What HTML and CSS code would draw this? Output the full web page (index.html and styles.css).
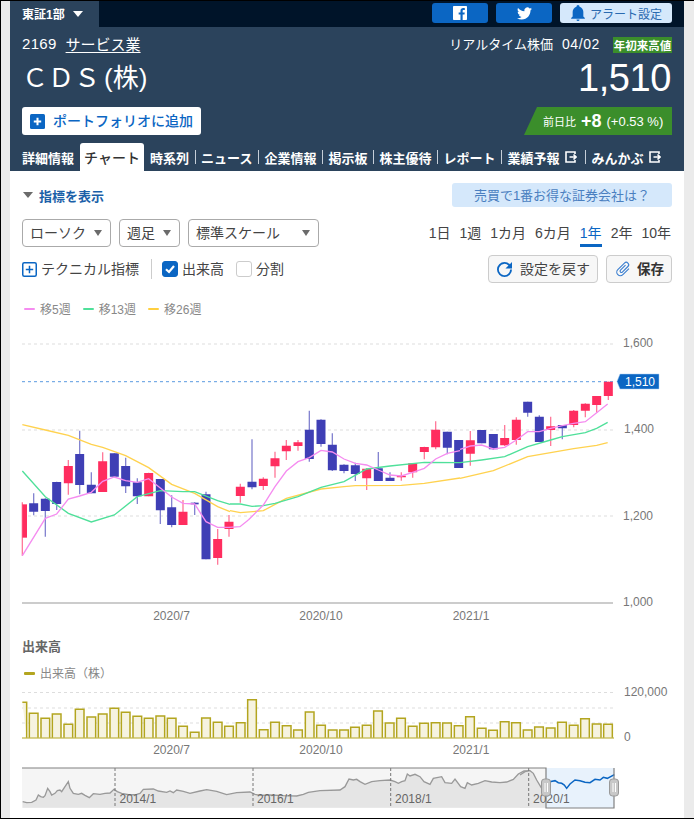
FILE: index.html
```html
<!DOCTYPE html>
<html lang="ja">
<head>
<meta charset="utf-8">
<title>CDS(株) チャート</title>
<link rel="stylesheet" href="styles.css">
</head>
<body>
<div class="frame">
  <div class="topbar">
    <div class="market">東証1部<span class="tri tri-white"></span></div>
    <div class="social">
      <a class="sbtn"><svg class="ico-fb" viewBox="0 0 24 24"><path d="M22.676 0H1.324C.593 0 0 .593 0 1.324v21.352C0 23.408.593 24 1.324 24h11.494v-9.294H9.689v-3.621h3.129V8.41c0-3.099 1.894-4.785 4.659-4.785 1.325 0 2.464.097 2.796.141v3.24h-1.921c-1.5 0-1.792.721-1.792 1.771v2.311h3.584l-.465 3.63H16.56V24h6.115c.733 0 1.325-.592 1.325-1.324V1.324C24 .593 23.408 0 22.676 0"/></svg></a>
      <a class="sbtn"><svg class="ico-tw" viewBox="0 0 24 24"><path d="M23.953 4.57a10 10 0 01-2.825.775 4.958 4.958 0 002.163-2.723c-.951.555-2.005.959-3.127 1.184a4.92 4.92 0 00-8.384 4.482C7.69 8.095 4.067 6.13 1.64 3.162a4.822 4.822 0 00-.666 2.475c0 1.71.87 3.213 2.188 4.096a4.904 4.904 0 01-2.228-.616v.06a4.923 4.923 0 003.946 4.827 4.996 4.996 0 01-2.212.085 4.936 4.936 0 004.604 3.417 9.867 9.867 0 01-6.102 2.105c-.39 0-.779-.023-1.17-.067a13.995 13.995 0 007.557 2.209c9.053 0 13.998-7.496 13.998-13.985 0-.21 0-.42-.015-.63A9.935 9.935 0 0024 4.59z"/></svg></a>
      <a class="alert"><svg class="ico-bell" viewBox="3 2 18 21"><path d="M21 19v1H3v-1l2-2v-6c0-3.1 2.03-5.83 5-6.71V4a2 2 0 114 0v.29c2.97.88 5 3.61 5 6.71v6zm-7 2a2 2 0 11-4 0"/></svg>アラート設定</a>
    </div>
  </div>
  <header class="head">
    <div class="row-meta">
      <div class="code"><span class="num">2169</span><a class="sector">サービス業</a></div>
      <div class="quote-meta"><span class="qt">リアルタイム株価</span><span class="qt date">04/02</span><span class="badge">年初来高値</span></div>
    </div>
    <div class="row-name">
      <h1 class="name">ＣＤＳ<span class="kabu">(株)</span></h1>
      <div class="price">1,510</div>
    </div>
    <div class="row-action">
      <a class="add"><svg class="ico-plus" viewBox="0 0 15 15"><rect width="15" height="15" rx="1.5"/><path class="plus-mark" d="M7.5 3.8v7.4M3.8 7.5h7.4"/></svg>ポートフォリオに追加</a>
      <div class="change"><span class="ch-label">前日比</span><b class="ch-val">+8</b><span class="ch-pct">(+0.53 %)</span></div>
    </div>
    <nav class="tabs">
      <a class="tab">詳細情報</a>
      <a class="tab tab-on">チャート</a>
      <a class="tab">時系列</a><i class="sep"></i>
      <a class="tab">ニュース</a><i class="sep"></i>
      <a class="tab">企業情報</a><i class="sep"></i>
      <a class="tab">掲示板</a><i class="sep"></i>
      <a class="tab">株主優待</a><i class="sep"></i>
      <a class="tab">レポート</a><i class="sep"></i>
      <a class="tab tab-ext">業績予報<svg class="ico-ext" viewBox="0 0 12 12"><path d="M10 3V1H1v10h9V9M4.5 6H11M8.5 3.5 11 6 8.5 8.5"/></svg></a><i class="sep sep-ext"></i>
      <a class="tab tab-ext">みんかぶ<svg class="ico-ext" viewBox="0 0 12 12"><path d="M10 3V1H1v10h9V9M4.5 6H11M8.5 3.5 11 6 8.5 8.5"/></svg></a>
    </nav>
  </header>
  <main class="content">
    <div class="bar bar-1">
      <a class="show"><span class="tri tri-gray"></span>指標を表示</a>
      <a class="promo">売買で1番お得な証券会社は？</a>
    </div>
    <div class="bar bar-2">
      <div class="selects">
        <div class="sel sel-a"><span class="lift">ローソク</span><span class="tri tri-gray"></span></div>
        <div class="sel sel-b"><span class="lift">週足</span><span class="tri tri-gray"></span></div>
        <div class="sel sel-c"><span class="lift">標準スケール</span><span class="tri tri-gray"></span></div>
      </div>
      <div class="ranges">
        <a>1日</a><a>1週</a><a>1カ月</a><a>6カ月</a><a class="on">1年</a><a>2年</a><a>10年</a>
      </div>
    </div>
    <div class="bar bar-3">
      <div class="opts">
        <a class="tech"><svg class="ico-tech" viewBox="0 0 15 15"><rect x=".75" y=".75" width="13.5" height="13.5" rx="1.5"/><path d="M7.5 3.8v7.4M3.8 7.5h7.4"/></svg><span class="lift">テクニカル指標</span></a>
        <i class="vdiv"></i>
        <label class="chk"><span class="box box-on"><svg viewBox="0 0 16 16"><path d="M4 8.3 7 11l5-6"/></svg></span><span class="lift">出来高</span></label>
        <label class="chk"><span class="box"></span><span class="lift">分割</span></label>
      </div>
      <div class="tools">
        <a class="tool tool-reset"><svg class="ico-tool" viewBox="4 4 16 16"><path d="M17.65 6.35A7.95 7.95 0 0012 4a8 8 0 108 8h-2a6 6 0 11-1.76-4.24L13 11h7V4z"/></svg><span class="lift">設定を戻す</span></a>
        <a class="tool tool-save"><svg class="ico-clip" viewBox="0 0 24 24"><path d="M16.5 6v11.5a4 4 0 01-8 0V5a2.5 2.5 0 015 0v10.5a1 1 0 01-2 0V6H10v9.5a2.5 2.5 0 005 0V5a4 4 0 00-8 0v12.5a5.5 5.5 0 0011 0V6h-1.5z"/></svg><span class="lift">保存</span></a>
      </div>
    </div>
    <div class="legend legend-ma">
      <span class="lg"><i class="dash c-pink"></i><span class="lift">移5週</span></span>
      <span class="lg"><i class="dash c-green"></i><span class="lift">移13週</span></span>
      <span class="lg"><i class="dash c-yellow"></i><span class="lift">移26週</span></span>
    </div>
    <svg class="chart" viewBox="10 330 674 300">
      <path class="grid" d="M22 344H613M22 430H613M22 516H613"/>
      <path class="last" d="M22 381.7H613"/>
      <path class="axis" d="M22 603H613"/>
      <g class="z" transform="translate(0 390) scale(.33333)">
        <path class="wick-r" d="M67 337V497M205 210V314M308 187V306M446 248V319M549 330V405M653 417V524M687 375V440"/>
        <path class="wick-b" d="M101 310V376M136 325V440M170 275V360M239 122V313M274 247V310M343 190V262M377 203V309M412 265V342M481 267V402M515 316V412M584 337V375M618 305V508"/>
        <path class="body-b" d="M101 340V365M136 326V363M170 276V342M239 192V285M274 284V310M343 190V260M377 228V289M412 277V319M481 267V361M515 352V405M618 313V508"/>
        <path class="body-b thin" d="M584 338V343"/>
        <path class="body-r" d="M205 228V280M308 214V306M446 249V319M549 365V405M653 447V504M687 395V417"/>
        <path class="body-r edge" d="M74 343V443"/>
      </g>
      <g class="z" transform="translate(230 390) scale(.33333)">
        <path class="wick-r" d="M31 281V338M100 262V300M135 185V263M169 150V210M204 150V182M410 235V300M514 247V272M548 220V263M583 170V208M617 94V178"/>
        <path class="wick-b" d="M66 148V298M238 62V215M273 88V170M307 130V243M342 223V250M376 218V273M445 186V273M480 247V273M652 125V193"/>
        <path class="body-r" d="M31 290V318M100 266V288M135 205V229M169 167V184M204 157V168M410 236V265M514 257V262M548 220V247M583 171V186M617 119V172"/>
        <path class="body-b" d="M66 275V292M238 119V207M273 89V162M307 164V241M342 224V243M376 226V252M445 235V273M480 263V273M652 125V173M686 150V234"/>
      </g>
      <g class="z" transform="translate(460 360) scale(.33333)">
        <path class="wick-r" d="M31 213V317M134 195V258M169 172V254M272 170V258M341 150V202M376 130V172M410 108V158M445 65V120"/>
        <path class="wick-b" d="M65 210V250M100 222V270M203 125V170M238 166V246M307 195V238"/>
        <path class="body-r" d="M31 241V281M134 234V256M169 179V240M272 199V210M341 152V195M376 131V152M410 108V135M445 65V108"/>
        <path class="body-b" d="M65 210V250M100 222V268M203 125V158M238 170V246M307 195V205"/>
      </g>
      <g class="z" transform="translate(0 390) scale(.33333)">
        <path class="ma-y" d="M67 104 136 120 205 136 274 163 308 172 377 197 446 233 515 283 584 310 653 350 690 365"/>
        <path class="ma-g" d="M67 243 136 320 205 370 274 396 343 375 412 320 481 302 549 305 584 305 653 332 690 343"/>
        <path class="ma-p" d="M67 497 136 385 170 372 205 327 239 318 274 307 308 274 343 261 377 272 412 277 446 266 481 294 515 321 549 340 584 342 618 395 653 412 687 412 720 410 745 390"/>
      </g>
      <g class="z" transform="translate(230 390) scale(.33333)">
        <path class="ma-y" d="M0 362 31 368 100 362 169 325 273 297 342 290 376 287 514 286 583 280 690 264"/>
        <path class="ma-g" d="M0 342 31 342 66 349 100 347 135 340 204 320 273 292 342 275 410 237 480 228 583 217 690 218"/>
        <path class="ma-p" d="M55 390 100 345 135 290 169 243 204 215 238 203 273 181 307 186 342 207 376 220 410 225 445 240 480 255 514 258 548 247 583 235 617 207 652 190 690 182"/>
      </g>
      <g class="z" transform="translate(460 360) scale(.33333)">
        <path class="ma-y" d="M0 355 100 332 203 290 341 266 410 256 443 248"/>
        <path class="ma-g" d="M0 308 65 300 134 290 203 260 272 240 307 230 376 218 410 205 443 187"/>
        <path class="ma-p" d="M0 268 31 258 65 255 100 267 134 262 169 240 203 215 238 215 272 205 307 197 341 190 376 185 410 158 443 132"/>
      </g>
      <path class="tag" d="M617 381.5 620 374H659V389H620Z"/>
      <text class="tag-t" x="625" y="386">1,510</text>
      <text class="lab" x="623" y="347">1,600</text>
      <text class="lab" x="624" y="433">1,400</text>
      <text class="lab" x="623" y="520">1,200</text>
      <text class="lab" x="623" y="606">1,000</text>
      <text class="lab mid" x="171.5" y="620">2020/7</text>
      <text class="lab mid" x="321" y="620">2020/10</text>
      <text class="lab mid" x="471" y="620">2021/1</text>
    </svg>
    <h2 class="vol-title">出来高</h2>
    <div class="legend legend-vol"><span class="lg"><i class="dash c-olive"></i><span class="lift">出来高（株）</span></span></div>
    <svg class="vol" viewBox="10 681 674 81">
      <path class="grid" d="M22 692.5H613M22 708H613M22 723H613"/>
      <g class="z" transform="translate(0 630) scale(.33333)">
        <path class="bar-v" d="M67 217H80V323M88 323V250H114V323M123 323V265H149V323M157 323V252H183V323M192 323V283H218V323M226 323V238H252V323M261 323V261H287V323M295 323V252H321V323M330 323V235H356V323M364 323V247H390V323M399 323V259H425V323M433 323V265H459V323M468 323V258H494V323M502 323V265H528V323M536 323V289H562V323M571 323V307H597V323M605 323V264H631V323M640 323V277H666V323M674 323V289H700V323M709 323V278H735V323M743 323V209H769V323M778 323V299H804V323M812 323V277H838V323M847 323V287H873V323M881 323V300H907V323M916 323V246H942V323M950 323V286H976V323M985 323V300H1011V323M1019 323V300H1045V323"/>
      </g>
      <g class="z" transform="translate(347 630) scale(.33333)">
        <path class="bar-v" d="M11 323V292H37V323M46 323V286H72V323M80 323V243H106V323M115 323V279H141V323M149 323V265H175V323M184 323V289H210V323M218 323V280H244V323M253 323V278H279V323M287 323V279H313V323M322 323V287H348V323M356 323V260H382V323M391 323V295H417V323M425 323V301H451V323M460 323V275H486V323M494 323V278H520V323M529 323V300H555V323M563 323V291H589V323M598 323V294H624V323M632 323V277H658V323M667 323V286H693V323M701 323V266H727V323M736 323V282H762V323M770 323V283H796V323"/>
      </g>
      <path class="base-v" d="M22 738H614"/>
      <text class="lab" x="624" y="696">120,000</text>
      <text class="lab" x="624" y="741">0</text>
      <text class="lab mid" x="171.5" y="754">2020/7</text>
      <text class="lab mid" x="321" y="754">2020/10</text>
      <text class="lab mid" x="471" y="754">2021/1</text>
    </svg>
    <svg class="nav" viewBox="10 762 674 55">
      <rect class="nav-bg" x="22" y="768" width="524" height="40"/>
      <rect class="nav-sel" x="546" y="768" width="68" height="40"/>
      <g class="z" transform="translate(10 760) scale(.33333)">
        <path class="nav-area" d="M38 125 50 128 65 127 78 120 85 105 92 110 100 112 105 107 113 85 120 95 125 105 135 100 142 92 150 90 155 95 165 80 175 65 180 85 190 100 205 103 215 100 225 106 238 113 250 101 270 103 285 100 300 99 312 88 322 95 335 100 360 105 380 103 390 100 400 88 430 87 445 93 470 97 480 93 490 98 500 90 520 94 540 100 570 93 590 89 620 94 650 104 680 98 720 96 735 103 750 106 780 105V143H38Z"/>
        <path class="nav-line" d="M38 125 50 128 65 127 78 120 85 105 92 110 100 112 105 107 113 85 120 95 125 105 135 100 142 92 150 90 155 95 165 80 175 65 180 85 190 100 205 103 215 100 225 106 238 113 250 101 270 103 285 100 300 99 312 88 322 95 335 100 360 105 380 103 390 100 400 88 430 87 445 93 470 97 480 93 490 98 500 90 520 94 540 100 570 93 590 89 620 94 650 104 680 98 720 96 735 103 750 106 780 105"/>
      </g>
      <g class="z" transform="translate(270 760) scale(.33333)">
        <path class="nav-area" d="M0 105 40 107 80 108 100 103 115 97 150 92 210 90 225 80 237 57 250 60 260 58 270 65 285 73 305 65 330 62 360 60 375 65 385 70 395 65 405 62 412 42 420 48 435 43 450 50 462 65 480 73 490 55 515 50 525 68 545 70 555 57 572 80 585 85 592 68 605 75 625 70 645 62 665 66 690 68 710 66 730 58 745 42 762 33 780 33V143H0Z"/>
        <path class="nav-line" d="M0 105 40 107 80 108 100 103 115 97 150 92 210 90 225 80 237 57 250 60 260 58 270 65 285 73 305 65 330 62 360 60 375 65 385 70 395 65 405 62 412 42 420 48 435 43 450 50 462 65 480 73 490 55 515 50 525 68 545 70 555 57 572 80 585 85 592 68 605 75 625 70 645 62 665 66 690 68 710 66 730 58 745 42 762 33 780 33"/>
      </g>
      <g class="z" transform="translate(520 760) scale(.33333)">
        <path class="nav-area" d="M0 45 15 35 30 32 40 40 50 60 65 85 78 100V143H0Z"/>
        <path class="nav-line" d="M0 45 15 35 30 32 40 40 50 60 65 85 78 100"/>
        <path class="nav-blue" d="M78 62 90 65 105 62 115 68 125 70 133 75 140 85 150 72 165 60 180 62 195 67 210 68 225 58 240 60 250 52 262 55 283 44"/>
      </g>
      <path class="nav-tick" d="M115 768V808M253 768V808M390.7 768V808M528.7 768V808"/>
      <path class="nav-edge" d="M22 768H546V808H614V768"/>
      <text class="lab nav-t" x="119.5" y="803">2014/1</text>
      <text class="lab nav-t" x="257" y="803">2016/1</text>
      <text class="lab nav-t" x="395" y="803">2018/1</text>
      <text class="lab nav-t" x="533" y="803">2020/1</text>
      <rect class="handle" x="541.5" y="779" width="9" height="17" rx="3"/>
      <path class="grip" d="M545 783V792M547.5 783V792"/>
      <rect class="handle" x="609.5" y="779" width="9" height="17" rx="3"/>
      <path class="grip" d="M613 783V792M615.5 783V792"/>
    </svg>
  </main>
</div>
</body>
</html>
```
FILE: styles.css
```css
* { box-sizing: border-box; }
html, body { margin: 0; padding: 0; }
body { font-family: "Liberation Sans", "Noto Sans CJK JP", sans-serif; color: #444; }
a { text-decoration: none; color: inherit; }
i { font-style: normal; }
.lift { padding-bottom: 2px; }

.frame {
  width: 694px; height: 819px;
  border-top: 1px solid #000; border-left: 1px solid #000; border-bottom: 1px solid #000;
  padding: 0 10px 0 9px;
  background: #ebebeb;
  display: flex; flex-direction: column;
  overflow: hidden;
}

.tri { display: inline-block; width: 0; height: 0; border-style: solid; border-width: 6px 5px 0; border-color: transparent; }
.tri-white { border-top-color: #fff; margin-left: 8px; border-width: 6px 5px 0; }
.tri-gray { border-top-color: #6b6b6b; }

.topbar { height: 26px; background: #001429; display: flex; justify-content: space-between; padding-right: 12px; flex: none; }
.market { width: 89px; background: #2b435c; color: #fff; font-size: 12px; font-weight: 700; display: flex; align-items: center; padding: 0 0 1px 12px; }
.social { display: flex; gap: 8px; padding-top: 2px; }
.sbtn { width: 56px; height: 20px; background: #0b66c3; border-radius: 3px; display: flex; align-items: center; justify-content: center; }
.ico-fb { width: 14px; height: 14px; fill: #fff; }
.ico-tw { width: 15px; height: 15px; fill: #fff; }
.alert { width: 112px; height: 20px; background: #d5e8fb; border-radius: 3px; color: #2a6ab0; font-size: 12px; display: flex; align-items: center; padding-left: 11px; }
.ico-bell { width: 14px; height: 16px; fill: #0b66c3; margin-right: 5px; }

.head { background: #2b435c; color: #fff; padding: 9px 12px 0; height: 144px; flex: none; }
.row-meta { display: flex; justify-content: space-between; align-items: center; height: 17px; }
.code { display: flex; align-items: center; font-size: 15px; padding-bottom: 2px; }
.num { letter-spacing: .3px; margin-right: 9px; }
.sector { text-decoration: underline; text-underline-offset: 2px; }
.quote-meta { display: flex; align-items: center; font-size: 13px; }
.qt { padding-bottom: 2px; }
.date { font-size: 14px; letter-spacing: .6px; margin-left: 9px; }
.badge { margin-left: 13px; width: 59px; height: 16px; background: #3b8e2b; font-size: 11.5px; font-weight: 700; display: flex; align-items: center; justify-content: center; white-space: nowrap; }
.row-name { display: flex; justify-content: space-between; align-items: center; height: 44px; margin-top: 3px; }
.name { margin: 0; font-size: 26px; font-weight: 400; line-height: 44px; }
.kabu { margin-left: 4px; }
.price { font-size: 38px; line-height: 44px; letter-spacing: -.4px; padding-right: 1px; }
.row-action { display: flex; justify-content: space-between; height: 28px; margin-top: 7px; }
.add { width: 179px; background: #fff; border-radius: 3px; color: #0b66c3; font-size: 14px; font-weight: 500; display: flex; align-items: center; padding: 0 0 2px 8px; }
.ico-plus { width: 15px; height: 15px; margin: 2px 8px 0 0; fill: #0b66c3; }
.plus-mark { fill: none; stroke: #fff; stroke-width: 2; }
.change {
  width: 148px; background: #3b8e2b;
  clip-path: polygon(13px 0, 100% 0, 100% 100%, 0 100%);
  display: flex; align-items: center; padding-left: 19px; white-space: nowrap;
}
.ch-label { font-size: 11px; }
.ch-val { font-size: 18px; margin-left: 5px; }
.ch-pct { font-size: 13px; margin-left: 5px; }
.tabs { display: flex; align-items: center; gap: 6px; height: 28px; margin-top: 8px; color: #fff; }
.tab { font-size: 13px; font-weight: 700; white-space: nowrap; flex: none; }
.tab-on { background: #fff; color: #333; font-weight: 500; font-size: 14px; height: 28px; width: 64px; border-radius: 3px 3px 0 0; display: flex; align-items: center; justify-content: center; }
.sep { width: 1px; height: 14px; background: #c5ced8; flex: none; margin-right: -1px; }
.sep-ext { margin-left: 2px; }
.tab-ext { display: flex; align-items: center; }
.ico-ext { width: 12px; height: 12px; margin-left: 6px; fill: none; stroke: #fff; stroke-width: 1.6; }

.content { background: #fff; flex: 1; padding: 0; min-height: 0; }
.bar { display: flex; justify-content: space-between; padding: 0 12px; }
.bar-1 { margin-top: 12px; height: 24px; align-items: center; }
.show { color: #1a5fa8; font-size: 13px; font-weight: 700; display: flex; align-items: center; padding-left: 1px; }
.show .tri { margin-right: 6px; border-width: 6px 5px 0; }
.promo { width: 220px; height: 24px; background: #d5e8fb; border-radius: 3px; color: #4a7fc0; font-size: 13px; display: flex; align-items: center; justify-content: center; white-space: nowrap; padding-bottom: 2px; }
.bar-2 { margin-top: 12px; height: 28px; }
.selects { display: flex; gap: 8px; }
.sel { height: 28px; border: 1px solid #aaa; border-radius: 4px; font-size: 14px; color: #444; display: flex; align-items: center; justify-content: space-between; padding: 0 8px 0 7px; }
.sel-a { width: 89px; }
.sel-b { width: 61px; }
.sel-c { width: 131px; }
.sel .tri { border-width: 6px 4.5px 0; }
.ranges { display: flex; gap: 9px; font-size: 14px; color: #444; padding: 2px 1px 0 0; }
.ranges a { height: 26px; padding-top: 2px; white-space: nowrap; line-height: 20px; }
.ranges .on { color: #0b66c3; border-bottom: 3px solid #0b66c3; }
.bar-3 { margin-top: 8px; height: 28px; align-items: center; }
.opts { display: flex; align-items: center; font-size: 14px; color: #444; }
.tech { display: flex; align-items: center; }
.ico-tech { width: 15px; height: 15px; margin-right: 4px; fill: none; stroke: #0b66c3; stroke-width: 1.5; }
.vdiv { width: 1px; height: 20px; background: #ccc; margin: 0 10px 0 12px; }
.chk { display: flex; align-items: center; margin-right: 12px; }
.box { width: 16px; height: 16px; border: 1.5px solid #ccc; border-radius: 3px; margin-right: 4px; display: block; }
.box-on { background: #0b66c3; border-color: #0b66c3; }
.box svg { display: block; margin: -1.5px; width: 16px; height: 16px; fill: none; stroke: #fff; stroke-width: 2.2; }
.tools { display: flex; gap: 8px; }
.tool { height: 28px; background: #f7f7f7; border: 1px solid #ccc; border-radius: 4px; font-size: 14px; color: #444; display: flex; align-items: center; white-space: nowrap; }
.tool-reset { width: 110px; padding-left: 8px; }
.tool-save { width: 66px; padding-left: 7px; font-weight: 700; font-size: 13.5px; color: #333; }
.ico-tool { width: 15px; height: 15px; fill: #0b66c3; margin-right: 8px; }
.ico-clip { width: 18px; height: 18px; fill: #3b7fd0; transform: rotate(45deg); margin-right: 5px; }

.legend { display: flex; gap: 12px; height: 16px; padding-left: 14px; font-size: 12px; color: #888; align-items: center; }
.legend-ma { margin-top: 18px; }
.lg { display: flex; align-items: center; white-space: nowrap; }
.dash { width: 11px; height: 2px; margin-right: 5px; border-radius: 1px; }
.c-pink { background: #f58cf0; }
.c-green { background: #4fe09a; }
.c-yellow { background: #ffcf3f; }
.c-olive { background: #b3a51f; height: 3px; }

svg.chart { display: block; width: 674px; height: 300px; margin-top: 13px; }
svg.vol { display: block; width: 674px; height: 81px; }
svg.nav { display: block; width: 674px; height: 55px; }
.vol-title { margin: 10px 0 0; padding-left: 12px; font-size: 13px; line-height: 14px; font-weight: 700; color: #666; }
.legend-vol { margin-top: 11px; }

.grid { fill: none; stroke: #ddd; stroke-width: 1; stroke-dasharray: 3 3; }
.last { fill: none; stroke: #5b9be0; stroke-width: 1; stroke-dasharray: 3 3; }
.axis { fill: none; stroke: #999; stroke-width: 1; }
.wick-b { fill: none; stroke: #8484d0; stroke-width: 4; }
.wick-r { fill: none; stroke: #ff7a9a; stroke-width: 4; }
.body-b { fill: none; stroke: #3f3fb5; stroke-width: 27; }
.body-b.thin { stroke-width: 24; }
.body-r { fill: none; stroke: #ff2d5f; stroke-width: 27; }
.body-r.edge { stroke-width: 14; }
.ma-p { fill: none; stroke: #f58cf0; stroke-width: 4; }
.ma-g { fill: none; stroke: #4fe09a; stroke-width: 4; }
.ma-y { fill: none; stroke: #ffd24f; stroke-width: 4; }
.tag { fill: #0b66c3; stroke: #a9cdf0; stroke-width: .5; }
.tag-t { fill: #fff; font-size: 12px; font-weight: 500; }
.lab { fill: #777; font-size: 12px; }
.mid { text-anchor: middle; }
.bar-v { fill: #f6f3e0; stroke: #b3a51f; stroke-width: 4.5; }
.base-v { fill: none; stroke: #b3a51f; stroke-width: 1; }
.nav-bg { fill: #f5f5f5; }
.nav-sel { fill: #e8f2fc; }
.nav-area { fill: #e5e5e5; }
.nav-line { fill: none; stroke: #999; stroke-width: 4; }
.nav-blue { fill: none; stroke: #0b66c3; stroke-width: 4.5; }
.nav-tick { fill: none; stroke: #777; stroke-width: 1; stroke-dasharray: 3 2; }
.nav-edge { fill: none; stroke: #808080; stroke-width: 1.2; }
.nav-t { fill: #666; }
.handle { fill: #c8c8c8; stroke: #999; stroke-width: 1; }
.grip { fill: none; stroke: #fff; stroke-width: 1; }
```
